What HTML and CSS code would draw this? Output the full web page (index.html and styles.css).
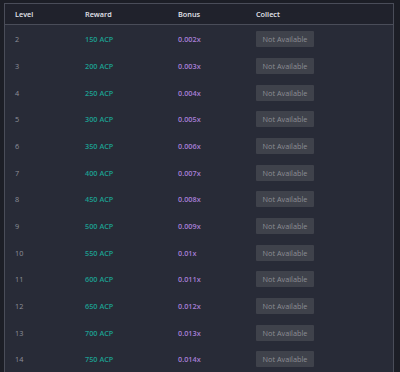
FILE: index.html
```html
<!DOCTYPE html>
<html>
<head>
<meta charset="utf-8">
<link rel="stylesheet" href="styles.css">
</head>
<body>
<div class="panel">
  <div class="row head">
    <div>Level</div><div>Reward</div><div>Bonus</div><div>Collect</div>
  </div>
  <div class="body">
  <div class="row"><div class="lvl">2</div><div class="rew">150 ACP</div><div class="bon">0.002x</div><div><span class="btn">Not Available</span></div></div>
  <div class="row"><div class="lvl">3</div><div class="rew">200 ACP</div><div class="bon">0.003x</div><div><span class="btn">Not Available</span></div></div>
  <div class="row"><div class="lvl">4</div><div class="rew">250 ACP</div><div class="bon">0.004x</div><div><span class="btn">Not Available</span></div></div>
  <div class="row"><div class="lvl">5</div><div class="rew">300 ACP</div><div class="bon">0.005x</div><div><span class="btn">Not Available</span></div></div>
  <div class="row"><div class="lvl">6</div><div class="rew">350 ACP</div><div class="bon">0.006x</div><div><span class="btn">Not Available</span></div></div>
  <div class="row"><div class="lvl">7</div><div class="rew">400 ACP</div><div class="bon">0.007x</div><div><span class="btn">Not Available</span></div></div>
  <div class="row"><div class="lvl">8</div><div class="rew">450 ACP</div><div class="bon">0.008x</div><div><span class="btn">Not Available</span></div></div>
  <div class="row"><div class="lvl">9</div><div class="rew">500 ACP</div><div class="bon">0.009x</div><div><span class="btn">Not Available</span></div></div>
  <div class="row"><div class="lvl">10</div><div class="rew">550 ACP</div><div class="bon">0.01x</div><div><span class="btn">Not Available</span></div></div>
  <div class="row"><div class="lvl">11</div><div class="rew">600 ACP</div><div class="bon">0.011x</div><div><span class="btn">Not Available</span></div></div>
  <div class="row"><div class="lvl">12</div><div class="rew">650 ACP</div><div class="bon">0.012x</div><div><span class="btn">Not Available</span></div></div>
  <div class="row"><div class="lvl">13</div><div class="rew">700 ACP</div><div class="bon">0.013x</div><div><span class="btn">Not Available</span></div></div>
  <div class="row"><div class="lvl">14</div><div class="rew">750 ACP</div><div class="bon">0.014x</div><div><span class="btn">Not Available</span></div></div>
  </div>
</div>
</body>
</html>
```

FILE: styles.css
```css
html, body {
  margin: 0;
  padding: 0;
  background: #1c1e26;
}
body {
  font-family: "Open Sans", "Noto Sans", sans-serif;
  font-size: 7.3px;
  padding: 3px 6px 0 4px;
  height: 369px;
  overflow: hidden;
}
.panel {
  border: 1px solid #4a4d59;
  border-bottom: none;
  background: #282b37;
  height: 368px;
  overflow: hidden;
}
.body {
  padding-top: 1px;
}
.row {
  display: grid;
  grid-template-columns: 70px 93px 78px 1fr;
  padding-left: 10px;
  height: 26.67px;
  align-items: center;
}
.row.head {
  height: 20px;
  background: #20222c;
  border-bottom: 1px solid #4a4d59;
  color: #e4e5ec;
  font-weight: 600;
}
.lvl { color: #8e909a; }
.rew { color: #1c9f90; font-weight: 600; }
.bon { color: #a67ed6; font-weight: 600; }
.btn {
  display: inline-block;
  width: 58px;
  height: 16px;
  line-height: 16px;
  text-align: center;
  background: #3f424b;
  color: #8d8e94;
  border-radius: 1px;
}
```
